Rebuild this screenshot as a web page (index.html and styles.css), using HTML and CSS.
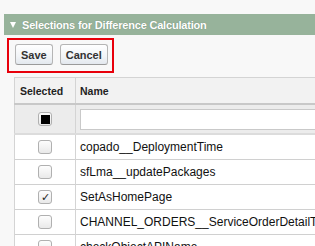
FILE: index.html
```html
<!DOCTYPE html>
<html lang="en">
<head>
  <meta charset="UTF-8">
  <title>Selections for Difference Calculation</title>
  <link rel="stylesheet" href="styles.css">
</head>
<body>
  <div class="section-head"><span class="twisty"></span>Selections for Difference Calculation</div>
  <div class="btn-box">
    <button class="btn">Save</button>
    <button class="btn">Cancel</button>
  </div>
  <table class="sel-table">
    <tr class="head-row">
      <th class="col-sel">Selected</th>
      <th>Name</th>
    </tr>
    <tr class="filter-row">
      <td class="col-sel"><span class="cb cb-all"><span></span></span></td>
      <td><input class="filter-input" type="text"></td>
    </tr>
    <tr><td class="col-sel"><span class="cb"></span></td><td>copado__DeploymentTime</td></tr>
    <tr><td class="col-sel"><span class="cb"></span></td><td>sfLma__updatePackages</td></tr>
    <tr><td class="col-sel"><span class="cb cb-on">&#10003;</span></td><td>SetAsHomePage</td></tr>
    <tr><td class="col-sel"><span class="cb"></span></td><td>CHANNEL_ORDERS__ServiceOrderDetailTrigger</td></tr>
    <tr><td class="col-sel"><span class="cb"></span></td><td>checkObjectAPIName</td></tr>
  </table>
</body>
</html>
```

FILE: styles.css
```css
html, body {
  margin: 0; padding: 0;
  background: #f8f8f8;
  font-family: "Liberation Sans", Arial, sans-serif;
  overflow: hidden;
}
.section-head {
  display: flex; align-items: center;
  margin: 14px 0 0 4px;
  height: 21px;
  background: #97b39b;
  color: #fff; font-weight: bold; font-size: 11px;
  letter-spacing: -0.2px;
  padding-left: 6px;
  white-space: nowrap;
  text-shadow: 0 0 1px #6a836d;
}
/* white triangle */
.twisty {
  width: 0; height: 0;
  border-left: 3px solid transparent; border-right: 3px solid transparent;
  border-top: 6px solid #fff;
  margin: 1px 6px 0 0;
}
.btn-box {
  display: inline-flex; gap: 7px;
  margin: 3px 0 0 7px;
  border: 2px solid #e8000b;
  padding: 4px 4px 6px 6px;
}
.btn {
  font-family: "Liberation Sans", Arial, sans-serif;
  font-size: 11px; font-weight: bold; color: #333;
  height: 21px; padding: 0 5px;
  border: 1px solid #b5b5b5; border-bottom-color: #9a9a9a;
  border-radius: 3px;
  background: linear-gradient(#ffffff, #f1f4f7 60%, #e3e8ee);
}
.sel-table {
  margin: 4px 0 0 14px;
  border-collapse: collapse;
  width: 420px;
  font-size: 12px;
  background: #fff;
  border: 1px solid #d4d4d4;
}
.sel-table td, .sel-table th {
  border-left: 1px solid #d4d4d4;
  padding: 0 4px;
  text-align: left;
  white-space: nowrap;
}
.sel-table td { height: 24px; border-top: 1px solid #d0d0d0; color: #111; }
.head-row th {
  height: 25px; font-size: 10.5px; color: #222;
  background: #f2f2f2;
  border-bottom: 2px solid #c8c8c8;
}
.sel-table th.col-sel { padding-left: 5px; }
.sel-table td.col-sel { width: 52px; text-align: center; }
.filter-row td { height: 28px; background: #ececec; border-top: none; border-bottom: 2px solid #dcdcdc; }
.filter-input {
  display: block; box-sizing: border-box;
  width: 100%; height: 21px; margin: 0;
  border: 1px solid #c9c9c9; background: #fff;
}
.cb {
  display: inline-flex; align-items: center; justify-content: center;
  box-sizing: border-box; width: 14px; height: 14px;
  border: 1px solid #b0b0b0; border-radius: 3px;
  background: linear-gradient(#fdfdfd, #e9e9e9);
  vertical-align: middle;
  font-size: 11px; line-height: 1; color: #222;
}
.cb-all span { width: 9px; height: 9px; background: #000; }
```
